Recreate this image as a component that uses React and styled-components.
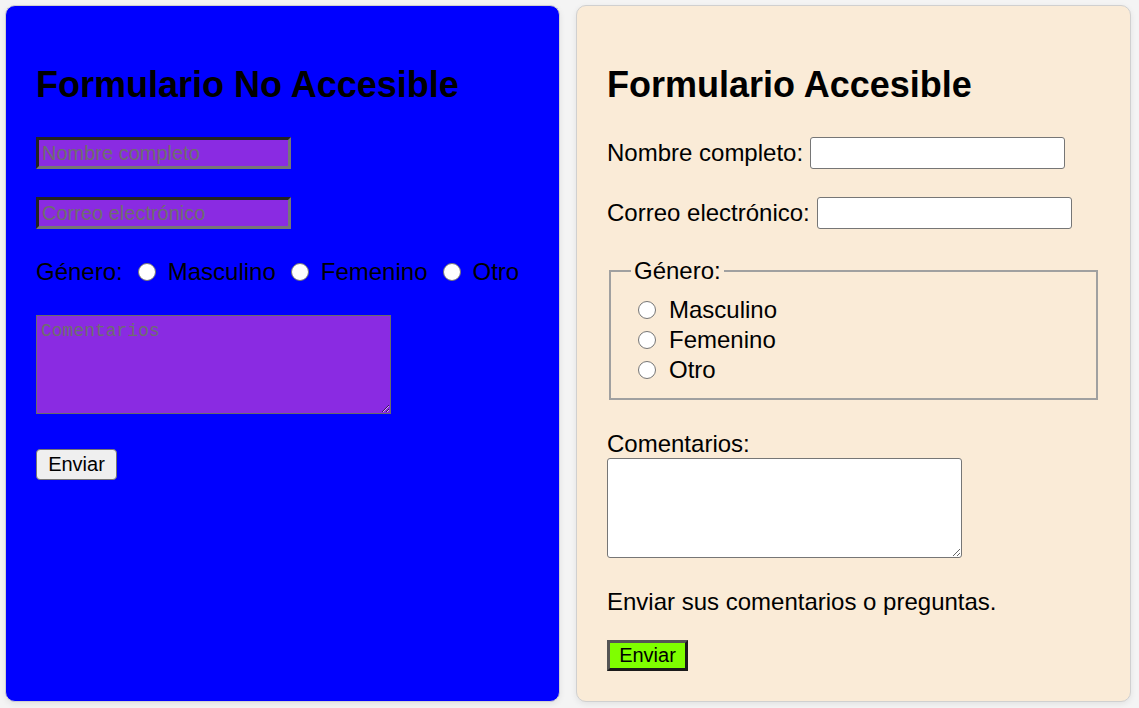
import styled, { createGlobalStyle } from "styled-components";

const GlobalStyle = createGlobalStyle`
  * {
    box-sizing: border-box;
  }
  body {
    margin: 0;
    background: #f4f4f4;
    font-family: "Liberation Sans", Arial, sans-serif;
    color: #000;
  }
`;

const Page = styled.div`
  min-height: 100vh;
  padding: 5px 8px 6px 5px;
  display: grid;
  grid-template-columns: 1fr 1fr;
  gap: 16px;
`;

const Card = styled.section`
  background: ${(p) => (p.$accessible ? "#faebd7" : "#0000ff")};
  border: 1px solid #d0d0d0;
  border-radius: 10px;
  box-shadow: 0 2px 6px rgba(0, 0, 0, 0.08);
  padding: 30px;
`;

const Title = styled.h2`
  margin: 28px 0 32px;
  font-size: 36px;
  line-height: 41px;
  font-weight: bold;
`;

const Row = styled.div`
  display: flex;
  align-items: center;
  gap: ${(p) => p.$gap ?? 7}px;
  height: ${(p) => p.$height || 32}px;
  margin-bottom: ${(p) => p.$mb ?? 28}px;
  font-size: 24px;
`;

const Label = styled.label`
  font-size: 24px;
  line-height: 28px;
  white-space: nowrap;
`;

const BadInput = styled.input`
  width: 255px;
  height: 32px;
  padding: 0 3px;
  background: #8a2be2;
  border-width: 3px;
  border-style: solid;
  border-color: #222 #767676 #767676 #222;
  font-family: "Liberation Sans", Arial, sans-serif;
  font-size: 20px;
  color: #000;
  &::placeholder {
    color: #6e6e6e;
  }
`;

const GoodInput = styled.input`
  width: 255px;
  height: 32px;
  padding: 0 3px;
  background: #fff;
  border: 1px solid #767676;
  border-radius: 3px;
  font-family: "Liberation Sans", Arial, sans-serif;
  font-size: 20px;
`;

const Radio = styled.input.attrs({ type: "radio" })`
  appearance: none;
  width: 18px;
  height: 18px;
  margin: 0 ${(p) => p.$mr ?? 12}px 0 ${(p) => p.$ml ?? 15}px;
  border-radius: 50%;
  border: 1px solid #767676;
  background: #fff;
  flex-shrink: 0;
`;

const InlineText = styled.span`
  font-size: 24px;
  line-height: 28px;
`;

const TextArea = styled.textarea`
  display: block;
  width: 355px;
  height: ${(p) => (p.$accessible ? 100 : 99)}px;
  padding: 5px 4px;
  border: 1px solid ${(p) => (p.$accessible ? "#767676" : "#6a6a6a")};
  border-radius: ${(p) => (p.$accessible ? 3 : 0)}px;
  background: ${(p) => (p.$accessible ? "#fff" : "#8a2be2")};
  font-family: "Liberation Mono", "DejaVu Sans Mono", monospace;
  font-size: 18px;
  margin-bottom: ${(p) => p.$mb ?? 0}px;
  &::placeholder {
    color: #6e6e6e;
  }
`;

const PlainButton = styled.button`
  width: 81px;
  height: 31px;
  padding: 0;
  background: #efefef;
  border: 1px solid #767676;
  border-radius: 4px;
  font-family: "Liberation Sans", Arial, sans-serif;
  font-size: 20px;
  color: #000;
`;

const GoButton = styled.button`
  width: 81px;
  height: 31px;
  padding: 0;
  background: #7fff00;
  border-width: 3px;
  border-style: solid;
  border-color: #555 #1a1a1a #1a1a1a #555;
  font-family: "Liberation Sans", Arial, sans-serif;
  font-size: 20px;
  color: #000;
`;

const Fieldset = styled.fieldset`
  margin: 0 2px 30px;
  padding: 10px 18px 13px;
  border: 2px solid #a0a0a0;
`;

const Legend = styled.legend`
  padding: 0 3px;
  margin-left: 2px;
  font-size: 24px;
  line-height: 28px;
`;

const BlockLabel = styled.label`
  display: block;
  font-size: 24px;
  line-height: 28px;
`;

const Note = styled.p`
  margin: 30px 0 24px;
  font-size: 24px;
  line-height: 28px;
`;

const Choice = styled.span`
  display: contents;
`;

const genders = ["Masculino", "Femenino", "Otro"];

export default function App() {
  return (
    <>
      <GlobalStyle />
      <Page>
        <Card>
          <Title>Formulario No Accesible</Title>
          <form onSubmit={(e) => e.preventDefault()}>
            <Row>
              <BadInput type="text" placeholder="Nombre completo" />
            </Row>
            <Row>
              <BadInput type="email" placeholder="Correo electrónico" />
            </Row>
            <Row $height={30} $mb={28} $gap={0}>
              <InlineText>Género:</InlineText>
              {genders.map((g) => (
                <Choice key={g}>
                  <Radio name="genero-bad" />
                  <InlineText>{g}</InlineText>
                </Choice>
              ))}
            </Row>
            <TextArea placeholder="Comentarios" $mb={35} />
            <PlainButton type="submit">Enviar</PlainButton>
          </form>
        </Card>

        <Card $accessible>
          <Title>Formulario Accesible</Title>
          <form onSubmit={(e) => e.preventDefault()}>
            <Row>
              <Label htmlFor="nombre">Nombre completo:</Label>
              <GoodInput id="nombre" type="text" />
            </Row>
            <Row>
              <Label htmlFor="correo">Correo electrónico:</Label>
              <GoodInput id="correo" type="email" />
            </Row>
            <Fieldset>
              <Legend>Género:</Legend>
              {genders.map((g) => (
                <Row key={g} $height={30} $mb={0} $gap={0}>
                  <Radio id={`g-${g}`} name="genero" $ml={9} $mr={13} />
                  <Label htmlFor={`g-${g}`}>{g}</Label>
                </Row>
              ))}
            </Fieldset>
            <BlockLabel htmlFor="comentarios">Comentarios:</BlockLabel>
            <TextArea id="comentarios" $accessible />
            <Note>Enviar sus comentarios o preguntas.</Note>
            <GoButton type="submit">Enviar</GoButton>
          </form>
        </Card>
      </Page>
    </>
  );
}
